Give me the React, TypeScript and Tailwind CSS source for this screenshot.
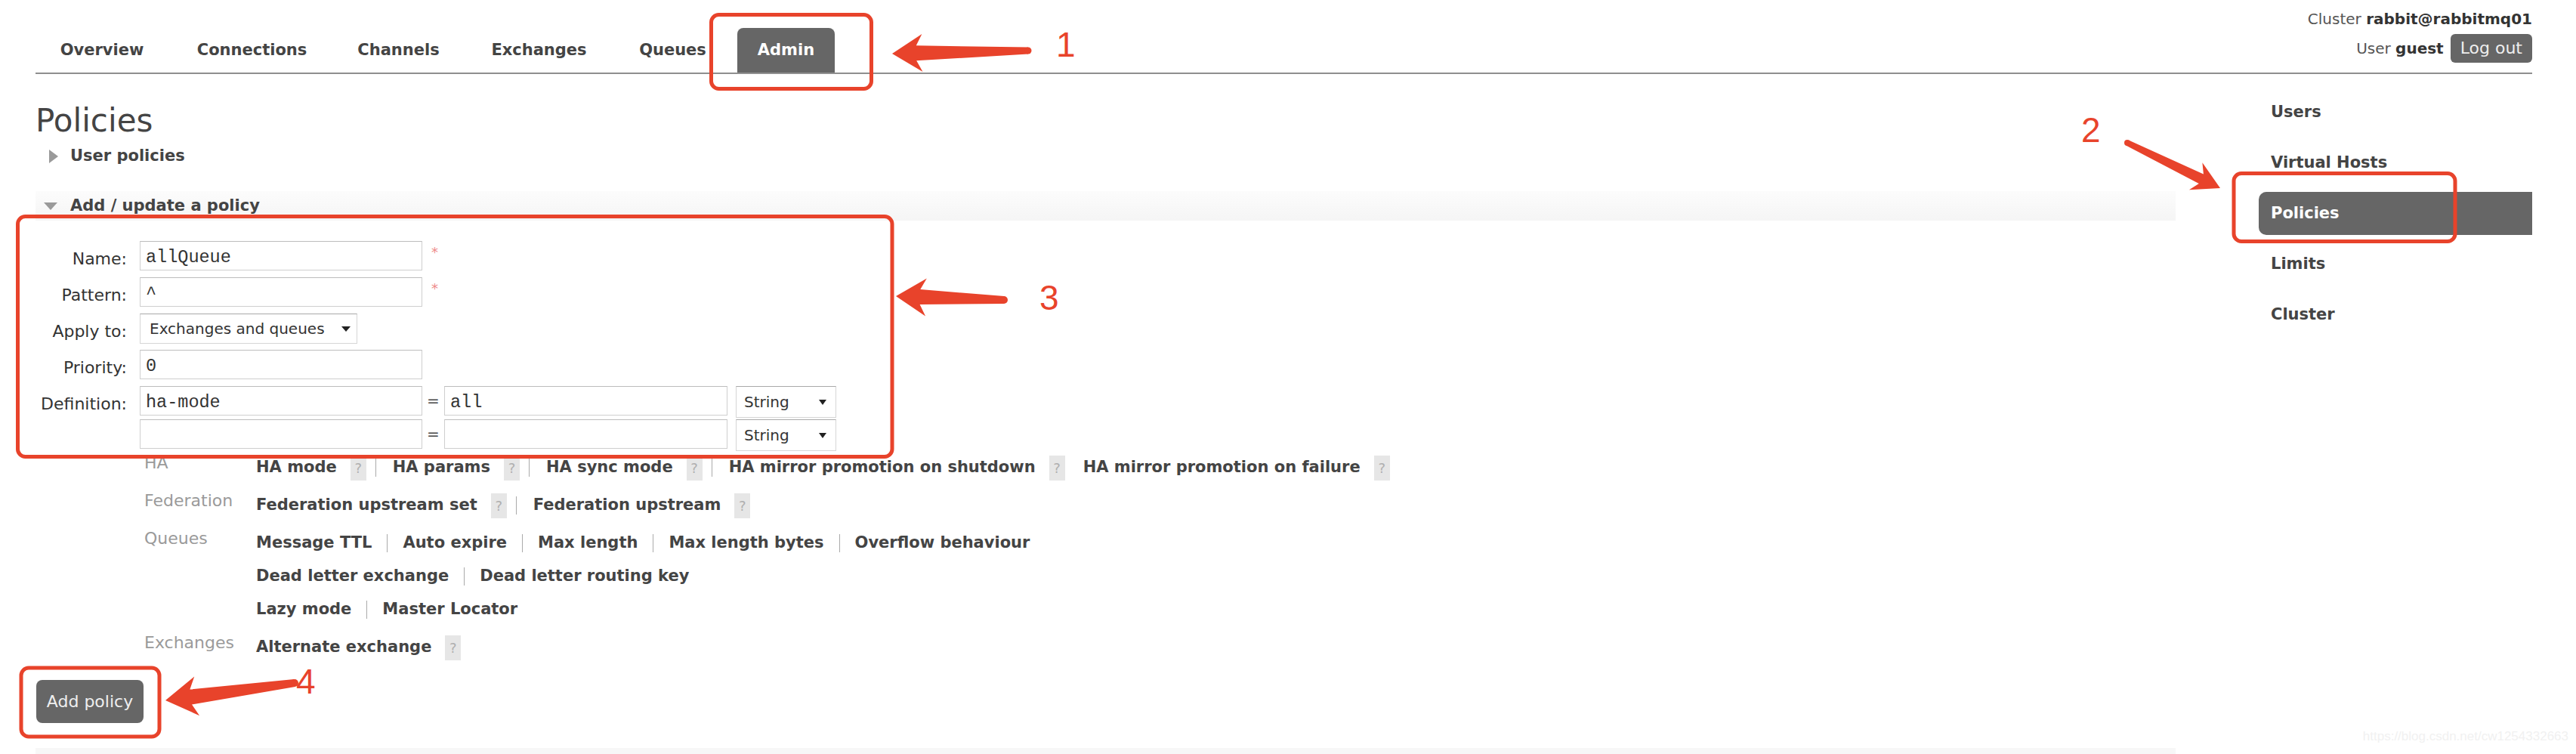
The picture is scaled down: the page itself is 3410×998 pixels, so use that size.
import React from 'react'

type Arg = { label: string; help?: boolean; noSep?: boolean }

const tabs = [
  { label: 'Overview', w: 'w-[172px]' },
  { label: 'Connections', w: 'w-[199px]' },
  { label: 'Channels', w: 'w-[163px]' },
  { label: 'Exchanges', w: 'w-[183px]' },
  { label: 'Queues', w: 'w-[145px]' },
  { label: 'Admin', w: 'w-[129px]', active: true },
]

const sideItems = ['Users', 'Virtual Hosts', 'Policies', 'Limits', 'Cluster']

const argGroups: { name: string; lines: Arg[][] }[] = [
  {
    name: 'HA',
    lines: [
      [
        { label: 'HA mode', help: true },
        { label: 'HA params', help: true },
        { label: 'HA sync mode', help: true },
        { label: 'HA mirror promotion on shutdown', help: true },
        { label: 'HA mirror promotion on failure', help: true, noSep: true },
      ],
    ],
  },
  {
    name: 'Federation',
    lines: [[{ label: 'Federation upstream set', help: true }, { label: 'Federation upstream', help: true }]],
  },
  {
    name: 'Queues',
    lines: [
      [
        { label: 'Message TTL' },
        { label: 'Auto expire' },
        { label: 'Max length' },
        { label: 'Max length bytes' },
        { label: 'Overflow behaviour' },
      ],
      [{ label: 'Dead letter exchange' }, { label: 'Dead letter routing key' }],
      [{ label: 'Lazy mode' }, { label: 'Master Locator' }],
    ],
  },
  {
    name: 'Exchanges',
    lines: [[{ label: 'Alternate exchange', help: true }]],
  },
]

function Help() {
  return (
    <span className="ml-[18px] w-[21px] h-[33px] bg-[#e6e6e6] text-[#b0b0b0] text-[18px] font-normal flex items-center justify-center">
      ?
    </span>
  )
}

function ArgLine({ items }: { items: Arg[] }) {
  return (
    <div className="flex items-center h-[44px] text-[21px] font-bold text-[#444] whitespace-nowrap">
      {items.map((it, i) => {
        const prev = items[i - 1]
        return (
          <React.Fragment key={it.label}>
            {i > 0 && !it.noSep && (
              <span className={`w-[1px] h-[24px] bg-[#aaa] ${prev?.help ? 'ml-[12px] mr-[22px]' : 'mx-[20px]'}`} />
            )}
            {i > 0 && it.noSep && <span className="w-[24px]" />}
            <span>{it.label}</span>
            {it.help && <Help />}
          </React.Fragment>
        )
      })}
    </div>
  )
}

function TextInput({ value, w = 'w-[374px]' }: { value: string; w?: string }) {
  return (
    <input
      readOnly
      value={value}
      className={`${w} h-[39px] border border-[#cfcfcf] border-t-[#bdbdbd] bg-white px-[7px] pt-[3px] font-['Liberation_Mono',monospace] text-[23.5px] text-[#333] outline-none`}
    />
  )
}

function FakeSelect({ value, w, arrow }: { value: string; w: string; arrow: string }) {
  return (
    <div className={`${w} flex items-center justify-between border border-[#d6d6d6] border-t-[#a9a9a9] bg-white text-[20px] text-[#333]`}>
      <span>{value}</span>
      <span className={arrow} />
    </div>
  )
}

function Label({ children }: { children: React.ReactNode }) {
  return <div className="w-[121px] h-[39px] text-right text-[22px] leading-[47px] text-[#333] mr-[17px]">{children}</div>
}

function arrowPts(tx: number, ty: number, hx: number, hy: number, hl: number, hw: number, sh: number, st: number, notch: number) {
  const dx = hx - tx
  const dy = hy - ty
  const L = Math.hypot(dx, dy)
  const ux = dx / L
  const uy = dy / L
  const nx = -uy
  const ny = ux
  const bx = hx - ux * hl
  const by = hy - uy * hl
  const jx = bx + ux * notch
  const jy = by + uy * notch
  const p = [
    [hx, hy],
    [bx + nx * hw, by + ny * hw],
    [jx + nx * sh, jy + ny * sh],
    [tx + nx * st, ty + ny * st],
    [tx - nx * st, ty - ny * st],
    [jx - nx * sh, jy - ny * sh],
    [bx - nx * hw, by - ny * hw],
  ]
  return p.map((q) => `${q[0].toFixed(1)},${q[1].toFixed(1)}`).join(' ')
}

const RED = '#e8432b'

function Annotations() {
  const arrows = [
    { t: [1361, 67], h: [1181, 71], hl: 40, hw: 25, sh: 10, st: 4.5 },
    { t: [2816, 189], h: [2939, 249], hl: 36, hw: 20, sh: 7, st: 4 },
    { t: [1329, 397], h: [1186, 392], hl: 40, hw: 25, sh: 10, st: 5 },
    { t: [390, 904], h: [219, 927], hl: 42, hw: 26, sh: 10, st: 5 },
  ]
  return (
    <svg className="absolute left-0 top-0 pointer-events-none" width={3410} height={998}>
      <g fill="none" stroke={RED} strokeWidth={5}>
        <rect x={941.5} y={19.5} width={212} height={98} rx={10} />
        <rect x={2957} y={229.5} width={293} height={90} rx={10} />
        <rect x={23.5} y={286.5} width={1157.5} height={318} rx={10} />
        <rect x={28} y={884} width={183} height={91} rx={10} />
      </g>
      {arrows.map((a, i) => (
        <g key={i} fill={RED}>
          <polygon points={arrowPts(a.t[0], a.t[1], a.h[0], a.h[1], a.hl, a.hw, a.sh, a.st, 8)} />
          <circle cx={a.t[0]} cy={a.t[1]} r={a.st} />
        </g>
      ))}
      <g fill={RED} fontFamily="'Liberation Sans', Arial, sans-serif" fontSize={46}>
        <text x={1398} y={75}>1</text>
        <text x={2755} y={188}>2</text>
        <text x={1376} y={410}>3</text>
        <text x={392} y={918}>4</text>
      </g>
    </svg>
  )
}

export default function App() {
  return (
    <div className="relative w-[3410px] h-[998px] overflow-hidden bg-white font-['DejaVu_Sans',Verdana,sans-serif] text-[#444]">
      <div className="ml-[47px] mr-[58px]">
        {/* header */}
        <div className="flex justify-between h-[98px] border-b-2 border-[#8f8f8f]">
          <div className="flex items-end pl-[2px]">
            {tabs.map((t) => (
              <div
                key={t.label}
                className={`${t.w} h-[59px] mr-[13px] flex items-center justify-center rounded-t-[8px] text-[21px] font-bold ${
                  t.active ? 'bg-[#666] text-white' : 'text-[#444]'
                }`}
              >
                {t.label}
              </div>
            ))}
          </div>
          <div className="flex flex-col items-end pt-[13px] text-[20px] leading-[24px] text-[#555]">
            <div>
              Cluster <b className="text-[#333]">rabbit@rabbitmq01</b>
            </div>
            <div className="mt-[8px] flex items-center h-[38px]">
              <span>
                User <b className="text-[#333]">guest</b>
              </span>
              <span className="ml-[9px] h-[38px] px-[13px] flex items-center rounded-[6px] bg-[#666] text-[#eee] text-[22px]">
                Log out
              </span>
            </div>
          </div>
        </div>

        {/* body */}
        <div className="flex">
          <div className="flex-1">
            <h1 className="mt-[41px] text-[42px] leading-[42px] font-normal text-[#444]">Policies</h1>

            <div className="mt-[11px] h-[30px] flex items-center pl-[18px]">
              <span className="w-0 h-0 border-y-[9px] border-y-transparent border-l-[12px] border-l-[#9a9a9a]" />
              <span className="ml-[16px] text-[21px] font-bold text-[#444]">User policies</span>
            </div>

            <div className="mt-[31px] mr-[110px] h-[39px] flex items-center pl-[11px] bg-gradient-to-b from-[#fcfcfc] to-[#f5f5f5]">
              <span className="w-0 h-0 border-x-[9px] border-x-transparent border-t-[10px] border-t-[#9a9a9a]" />
              <span className="ml-[17px] text-[21px] font-bold text-[#444]">Add / update a policy</span>
            </div>

            {/* form */}
            <div className="mt-[27px]">
              <div className="flex h-[39px] mb-[9px]">
                <Label>Name:</Label>
                <TextInput value="allQueue" />
                <span className="ml-[12px] mt-[6px] text-[18px] leading-[18px] text-[#ee8a8a]">*</span>
              </div>
              <div className="flex h-[39px] mb-[9px]">
                <Label>Pattern:</Label>
                <TextInput value="^" />
                <span className="ml-[12px] mt-[6px] text-[18px] leading-[18px] text-[#ee8a8a]">*</span>
              </div>
              <div className="flex h-[39px] mb-[9px]">
                <Label>Apply to:</Label>
                <FakeSelect
                  value="Exchanges and queues"
                  w="w-[288px] h-[40px] pl-[12px] pr-[8px]"
                  arrow="w-0 h-0 border-x-[6px] border-x-transparent border-t-[7px] border-t-[#222]"
                />
              </div>
              <div className="flex h-[39px] mb-[9px]">
                <Label>Priority:</Label>
                <TextInput value="0" />
              </div>
              <div className="flex h-[42px] mb-[2px]">
                <Label>Definition:</Label>
                <TextInput value="ha-mode" />
                <span className="w-[29px] h-[39px] text-center text-[20px] leading-[39px] text-[#444]">=</span>
                <TextInput value="all" w="w-[375px]" />
                <FakeSelect
                  value="String"
                  w="ml-[11px] w-[133px] h-[42px] pl-[10px] pr-[12px]"
                  arrow="w-0 h-0 border-x-[5px] border-x-transparent border-t-[7px] border-t-[#222]"
                />
              </div>
              <div className="flex h-[42px]">
                <div className="w-[121px] mr-[17px]" />
                <TextInput value="" />
                <span className="w-[29px] h-[39px] text-center text-[20px] leading-[39px] text-[#444]">=</span>
                <TextInput value="" w="w-[375px]" />
                <FakeSelect
                  value="String"
                  w="ml-[11px] w-[133px] h-[42px] pl-[10px] pr-[12px]"
                  arrow="w-0 h-0 border-x-[5px] border-x-transparent border-t-[7px] border-t-[#222]"
                />
              </div>
            </div>

            {/* argument shortcuts */}
            <div className="pl-[144px]">
              {argGroups.map((g) => (
                <div key={g.name} className="flex mb-[6px]">
                  <div className="w-[148px] text-[22px] leading-[32px] text-[#9a9a9a]">{g.name}</div>
                  <div className="flex flex-col">
                    {g.lines.map((l, i) => (
                      <ArgLine key={i} items={l} />
                    ))}
                  </div>
                </div>
              ))}
            </div>

            <button className="mt-[15px] ml-[1px] w-[142px] h-[57px] rounded-[8px] bg-[#666] text-[#eee] text-[22px]">
              Add policy
            </button>

            <div className="mt-[33px] mr-[110px] h-[10px] bg-[#f7f7f7]" />
          </div>

          {/* sidebar */}
          <div className="w-[362px] pt-[22px]">
            {sideItems.map((s) => (
              <div
                key={s}
                className={`h-[57px] mb-[10px] flex items-center pl-[16px] text-[21px] font-bold ${
                  s === 'Policies' ? 'bg-[#666] text-white rounded-l-[10px]' : 'text-[#444]'
                }`}
              >
                {s}
              </div>
            ))}
          </div>
        </div>
      </div>

      <span className="absolute right-[10px] bottom-[11px] font-['Liberation_Sans',Arial,sans-serif] text-[17px] text-[#f1f1f1]">
        https://blog.csdn.net/cw1254332663
      </span>

      <Annotations />
    </div>
  )
}
